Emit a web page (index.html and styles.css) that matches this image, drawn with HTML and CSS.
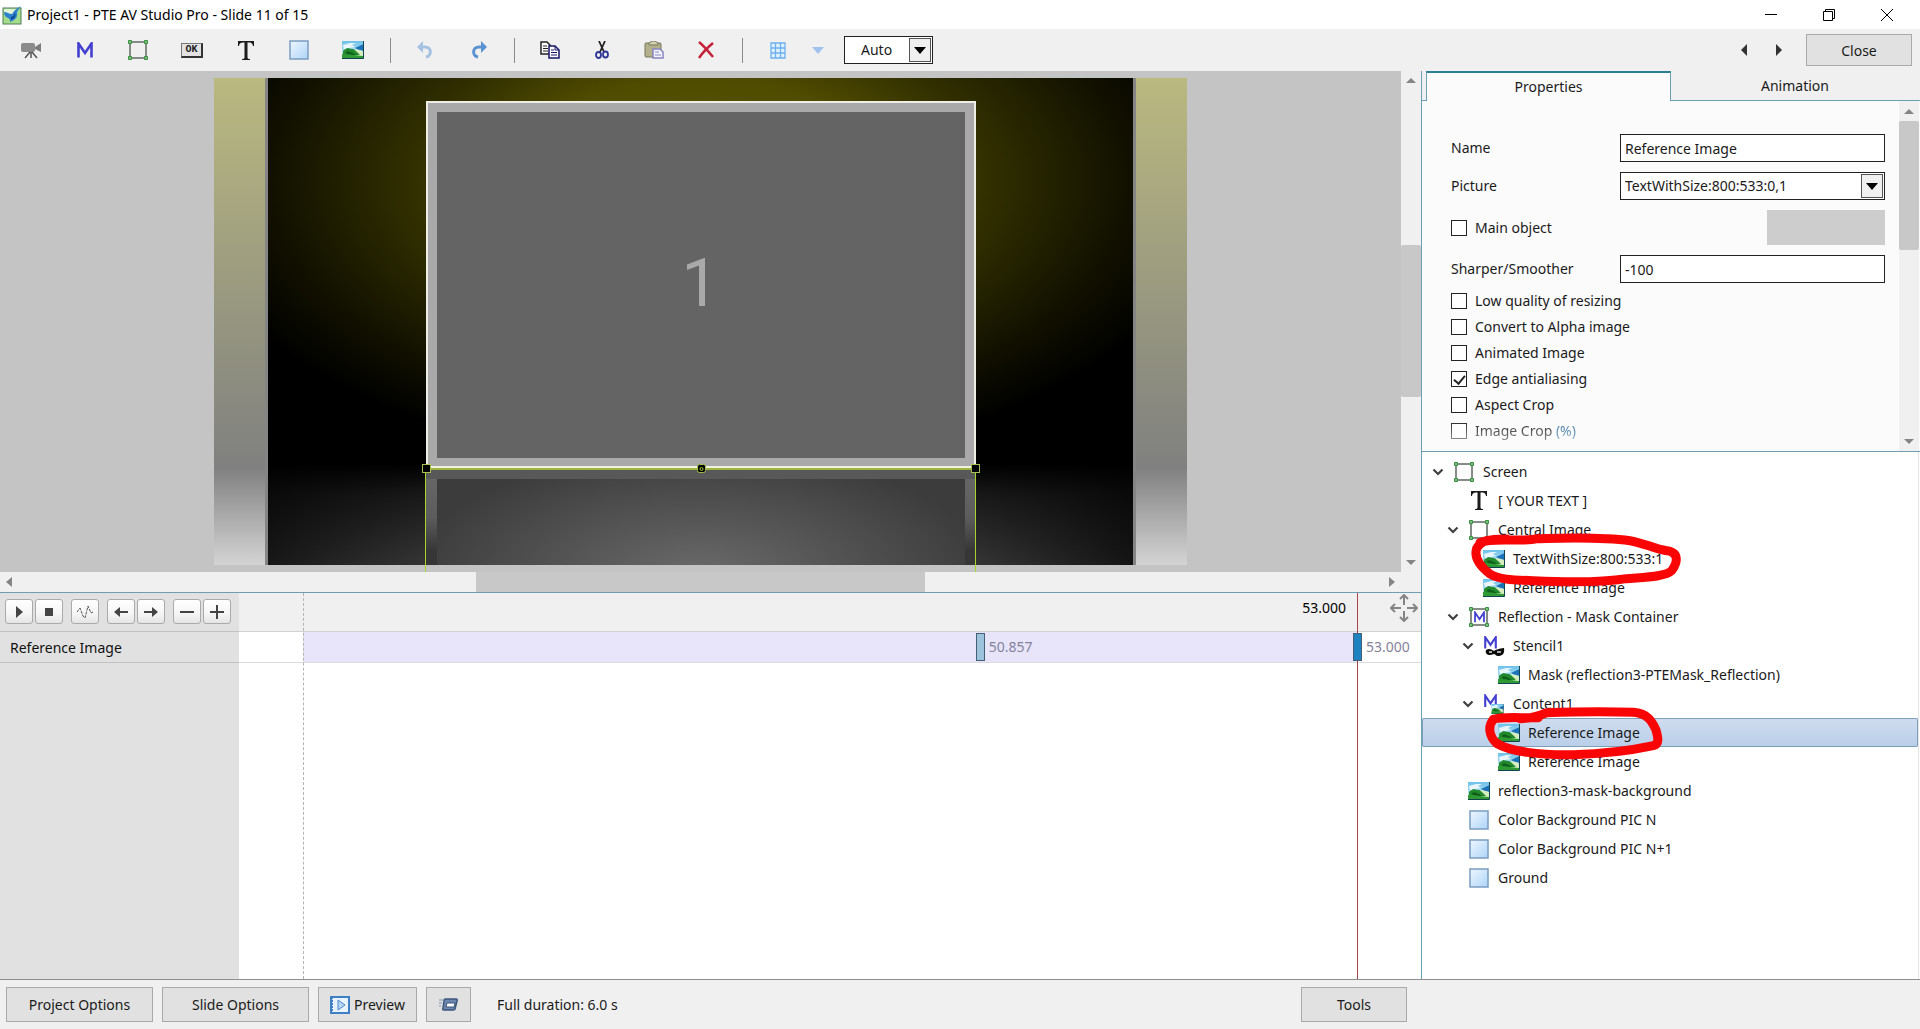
FILE: index.html
```html
<!DOCTYPE html>
<html lang="en">
<head>
<meta charset="utf-8">
<title>Project1 - PTE AV Studio Pro - Slide 11 of 15</title>
<link rel="stylesheet" href="styles.css">
</head>
<body>
<svg class="defs" width="0" height="0" aria-hidden="true">
  <defs>
    <linearGradient id="sky" x1="0" y1="0" x2="0" y2="1"><stop offset="0" stop-color="#6cc0ea"/><stop offset="1" stop-color="#e2f6f4"/></linearGradient>
    <linearGradient id="pane" x1="0" y1="0" x2="1" y2="1"><stop offset="0" stop-color="#eef7ff"/><stop offset="1" stop-color="#aed4f8"/></linearGradient>
    <symbol id="i-image" viewBox="0 0 22 18">
      <rect width="22" height="18" fill="url(#sky)"/>
      <path d="M1 4 8 2l6 0-4 2 3 2-6 1-5 1z" fill="#fff" opacity=".8"/>
      <path d="M13 7c3-1 5-3 9-4v7l-5-1z" fill="#1b72b8"/>
      <path d="M12 9c4-1 7 0 10 2v5H9z" fill="#d6edc0"/>
      <path d="M1 11c0-3 3-2 4-4 2 0 3 1 5 1 3 0 3 2 5 3l3 3H1z" fill="#238a2c"/>
      <path d="M4 11c3-2 4 0 7 1l3 2H5z" fill="#0d5f1b"/>
      <path d="M0 13c7 0 12 1 21 2v3H0z" fill="#2f9a33"/>
      <path d="M21.500 0v17.500H0" fill="none" stroke="#0f4450"/>
    </symbol>
    <symbol id="i-frame" viewBox="0 0 20 20">
      <rect x="2" y="2" width="16" height="16" fill="none" stroke="#858b85" stroke-width="2"/>
      <g fill="#7bc47f" stroke="#3b8f43"><path d="M.5.5h3v3h-3zM16.500.5h3v3h-3zM.5 16.500h3v3h-3zM16.500 16.500h3v3h-3z"/></g>
    </symbol>
    <symbol id="i-square" viewBox="0 0 20 20"><rect x="1" y="1" width="18" height="18" fill="url(#pane)" stroke="#7b9cc0" stroke-width="1.500"/></symbol>
    <symbol id="i-chevron" viewBox="0 0 12 8"><path d="M1.500 1.500 6 6l4.500-4.500" fill="none" stroke="#404040" stroke-width="2.200"/></symbol>
    <symbol id="i-down" viewBox="0 0 12 7"><path d="M0 0h12L6 7z" fill="currentColor"/></symbol>
    <symbol id="i-m" viewBox="0 0 16 16"><path d="M1.500 15.500V1.500L8 11l6.500-9.500v14" fill="none" stroke="currentColor" stroke-width="2.600"/></symbol>
    <symbol id="i-t" viewBox="0 0 16 19"><path d="M0 0h16v5h-1c-.5-3-1.500-3.600-5.500-3.600V16c0 1.500.5 2 2.500 2v1H4v-1c2 0 2.500-.5 2.500-2V1.400C2.500 1.400 1.500 2 1 5H0z" fill="#1c1c1c"/></symbol>
  </defs>
</svg>

<header class="titlebar">
  <svg class="app-icon" width="20" height="20" viewBox="0 0 20 20">
    <rect x="1" y="3" width="18" height="16" fill="#a5dc8b" stroke="#4f7f55"/>
    <path d="M2 4h15l-5 5-6 1-4-2z" fill="#dff3d8"/>
    <path d="M2 7c3 0 5 2 8 2l3-4 6-4-4 6c1 6-2 8-7 10 0-2 0-3-2-4-3-1-4-3-4-6z" fill="#2c82cc"/>
    <path d="M9 12c2 0 4-2 4-5 1 4 0 6-4 8z" fill="#0b418f"/>
  </svg>
  <h1 class="title">Project1 - PTE AV Studio Pro - Slide 11 of 15</h1>
  <div class="window-buttons">
    <button aria-label="Minimize"><svg width="12" height="12" viewBox="0 0 12 12"><path d="M0 5.500h12"/></svg></button>
    <button aria-label="Restore"><svg width="12" height="12" viewBox="0 0 12 12"><path d="M.5 2.500h9v9h-9zM2.500 2.500v-2h9v9h-2"/></svg></button>
    <button aria-label="Close window"><svg width="12" height="12" viewBox="0 0 12 12"><path d="m0 0 12 12M12 0 0 12"/></svg></button>
  </div>
</header>

<nav class="toolbar">
  <div class="tools tools-objects">
    <button aria-label="Camera"><svg width="20" height="20" viewBox="0 0 20 20"><rect y="3" width="14" height="9" rx="2" fill="#8b8b8b"/><path d="M14 7l6-4v9l-6-3z" fill="#7d7d7d"/><path d="M10 12v6M9 12l-5 6M11 12l5 6" stroke="#555" stroke-width="1.500"/></svg></button>
    <button class="blue" aria-label="Mask"><svg width="16" height="16"><use href="#i-m"/></svg></button>
    <button aria-label="Frame"><svg width="20" height="20"><use href="#i-frame"/></svg></button>
    <button aria-label="Button"><span class="ok">OK</span></button>
    <button aria-label="Text"><svg width="16" height="19"><use href="#i-t"/></svg></button>
    <button aria-label="Rectangle"><svg width="20" height="20"><use href="#i-square"/></svg></button>
    <button aria-label="Image"><svg width="22" height="18"><use href="#i-image"/></svg></button>
  </div>
  <span class="sep"></span>
  <div class="tools">
    <button aria-label="Undo"><svg width="16" height="18" viewBox="0 0 16 18"><path d="M4 6h4c7 0 7 9 1 10" fill="none" stroke="#a5c2e3" stroke-width="3"/><path d="M0 6l6-6v12z" fill="#a5c2e3"/></svg></button>
    <button aria-label="Redo"><svg width="16" height="18" viewBox="0 0 16 18"><path d="M12 6H8c-7 0-7 9-1 10" fill="none" stroke="#5b92d2" stroke-width="3"/><path d="M16 6l-6-6v12z" fill="#5b92d2"/></svg></button>
  </div>
  <span class="sep"></span>
  <div class="tools tools-edit">
    <button aria-label="Copy"><svg width="20" height="18" viewBox="0 0 20 18"><path d="M1 1h6l3 3v9H1z" fill="#fff" stroke="#222" stroke-width="1.500"/><path d="M3 5h4M3 7.500h5M3 10h5" stroke="#222"/><path d="M9 5h6l4 4v8H9z" fill="#fff" stroke="#15156b" stroke-width="1.500"/><path d="M15 5v4h4M11 9h3M11 11.500h6M11 14h6" fill="none" stroke="#15156b"/></svg></button>
    <button aria-label="Cut"><svg width="14" height="18" viewBox="0 0 14 18"><path d="M4 0l5 11M10 0L5 11" stroke="#222" stroke-width="1.800"/><g fill="none" stroke="#2f3696" stroke-width="1.800"><ellipse cx="3.500" cy="14" rx="2.500" ry="3"/><ellipse cx="10.500" cy="13.500" rx="2.500" ry="3"/></g></svg></button>
    <button aria-label="Paste"><svg width="20" height="18" viewBox="0 0 20 18"><rect x="1" y="2" width="16" height="14" rx="1" fill="#b3b18b" stroke="#77765a"/><path d="M5 4V2l3-2h3l3 2v2z" fill="#d2d0ae" stroke="#77765a"/><path d="M9 8h7l3 3v6H9z" fill="#f4f4ff" stroke="#8884c0" stroke-width="1.500"/><path d="M11 11h4M11 14h6" stroke="#8884c0"/></svg></button>
    <button aria-label="Delete"><svg width="16" height="18" viewBox="0 0 16 18"><path d="M1 1c5 4 9 9 14 15M15 2C9 7 5 11 1 17" fill="none" stroke="#c5203a" stroke-width="2.500"/></svg></button>
  </div>
  <span class="sep"></span>
  <div class="tools tools-grid">
    <button aria-label="Grid"><svg width="16" height="17" viewBox="0 0 16 17"><path d="M1 1h14v15H1zM1 6h14M1 11h14M5.500 1v15M10.500 1v15" fill="#e1f1ff" stroke="#6cb0ee" stroke-width="1.300"/></svg></button>
    <button class="caret" aria-label="Grid options"><svg width="12" height="7"><use href="#i-down"/></svg></button>
    <div class="select zoom-select">
      <select aria-label="Zoom"><option>Auto</option></select>
      <span class="drop"><svg width="12" height="7"><use href="#i-down"/></svg></span>
    </div>
  </div>
  <div class="slide-nav">
    <button aria-label="Previous slide"><svg width="6" height="12" viewBox="0 0 6 12"><path d="M6 0v12L0 6z"/></svg></button>
    <button aria-label="Next slide"><svg width="6" height="12" viewBox="0 0 6 12"><path d="M0 0v12l6-6z"/></svg></button>
    <button class="push close">Close</button>
  </div>
</nav>

<div class="workspace">
  <main class="editor">
    <div class="canvas-row">
      <div class="canvas">
        <svg class="slide" width="973" height="501" viewBox="214 71 973 501">
          <defs>
            <linearGradient id="wall" x1="0" y1="0" x2="0" y2="1"><stop offset="0" stop-color="#bab980"/><stop offset=".8" stop-color="#808080"/><stop offset="1" stop-color="#d4d4d4"/></linearGradient>
            <radialGradient id="glow" gradientUnits="userSpaceOnUse" cx="0" cy="0" r="1" gradientTransform="translate(700 180) scale(520 285)"><stop offset="0" stop-color="#605b00"/><stop offset=".36" stop-color="#4f4b00"/><stop offset=".54" stop-color="#333100"/><stop offset=".83" stop-color="#111000"/><stop offset="1" stop-color="#000"/></radialGradient>
            <linearGradient id="floor"><stop offset="0" stop-color="#171717"/><stop offset=".18" stop-color="#353535"/><stop offset=".5" stop-color="#686868"/><stop offset=".82" stop-color="#353535"/><stop offset="1" stop-color="#141414"/></linearGradient>
            <linearGradient id="horizon" x1="0" y1="0" x2="0" y2="1"><stop offset="0" stop-color="#000"/><stop offset=".3" stop-color="#000" stop-opacity=".55"/><stop offset="1" stop-color="#000" stop-opacity="0"/></linearGradient>
            <radialGradient id="mirror" gradientUnits="userSpaceOnUse" cx="0" cy="0" r="1" gradientTransform="translate(700 575) scale(290 125)"><stop offset="0" stop-color="#6a6a6a"/><stop offset="1" stop-color="#3c3c3c"/></radialGradient>
            <linearGradient id="fade" x1="0" y1="0" x2="0" y2="1"><stop offset="0" stop-color="#686868"/><stop offset=".5" stop-color="#5c5c5c"/><stop offset=".85" stop-color="#363636"/></linearGradient>
          </defs>
          <rect x="214" y="78" width="973" height="487" fill="url(#wall)"/>
          <path d="M266.500 78v487M1134.500 78v487" stroke="#858585" stroke-width="3"/>
          <rect x="268" y="78" width="865" height="487" fill="#000"/>
          <rect x="268" y="78" width="865" height="390" fill="url(#glow)"/>
          <rect x="268" y="465" width="865" height="100" fill="url(#floor)"/>
          <rect x="268" y="464" width="865" height="101" fill="url(#horizon)"/>
          <rect x="426" y="470" width="550" height="95" fill="url(#fade)"/>
          <path d="M426 470h550v9H426z" fill="#585858"/>
          <rect x="437" y="479" width="528" height="86" fill="url(#mirror)"/>
          <rect x="427" y="102" width="548" height="365" fill="#a9a9a9" stroke="#eeeee6" stroke-width="2"/>
          <rect x="437" y="112" width="528" height="346" fill="#646464"/>
          <text class="slide-number" x="700" y="306" text-anchor="middle">1</text>
          <path d="M426 467.500h550" stroke="#f2f5dc"/>
          <path d="M426 469h550" stroke="#9bb540" stroke-width="2"/>
          <path d="M425.500 468v104M975.500 468v104" fill="none" stroke="#a6d52c"/>
          <g fill="#000" stroke="#a6c050"><rect x="422.500" y="464.500" width="8" height="8"/><rect x="971.500" y="464.500" width="8" height="8"/><rect x="697.500" y="464.500" width="8" height="8" rx="2"/></g>
          <circle cx="701.500" cy="469" r="1.500" fill="none" stroke="#a6d52c"/>
        </svg>
      </div>
      <div class="scroll-v">
        <svg width="10" height="5" viewBox="0 0 10 5"><path d="M0 5h10L5 0z"/></svg>
        <span class="thumb"></span>
        <svg width="10" height="5" viewBox="0 0 10 5"><path d="M0 0h10L5 5z"/></svg>
      </div>
    </div>
    <div class="scroll-h">
      <svg width="6" height="10" viewBox="0 0 6 10"><path d="M6 0v10L0 5z"/></svg>
      <span class="thumb"></span>
      <svg width="6" height="10" viewBox="0 0 6 10"><path d="M0 0v10l6-5z"/></svg>
    </div>

    <section class="timeline">
      <div class="tracks">
        <div class="transport">
          <div class="pair">
            <button aria-label="Play"><svg width="7" height="12" viewBox="0 0 7 12"><path d="M0 0v12l7-6z"/></svg></button>
            <button aria-label="Stop"><svg width="8" height="8" viewBox="0 0 8 8"><path d="M0 0h8v8H0z"/></svg></button>
          </div>
          <div class="pair">
            <button aria-label="Waveform"><svg width="16" height="14" viewBox="0 0 16 14"><path d="M0 7l3-4 3 8 2 2 3-12 3 7 2-1" fill="none" stroke="#555" stroke-dasharray="3 1"/></svg></button>
          </div>
          <div class="pair">
            <button aria-label="Previous keyframe"><svg width="14" height="12" viewBox="0 0 14 12"><path d="M0 6l6-5v4h8v2H6v4z"/></svg></button>
            <button aria-label="Next keyframe"><svg width="14" height="12" viewBox="0 0 14 12"><path d="M14 6L8 1v4H0v2h8v4z"/></svg></button>
          </div>
          <div class="pair">
            <button aria-label="Remove keyframe"><svg width="14" height="14" viewBox="0 0 14 14"><path d="M0 6h14v2H0z"/></svg></button>
            <button aria-label="Add keyframe"><svg width="14" height="14" viewBox="0 0 14 14"><path d="M0 6h6V0h2v6h6v2H8v6H6V8H0z"/></svg></button>
          </div>
        </div>
        <div class="track-name">Reference Image</div>
      </div>
      <div class="lanes">
        <div class="ruler">
          <output class="time">53.000</output>
          <svg class="move" width="28" height="28" viewBox="0 0 28 28"><path d="M14 2v9M14 17v9M2 14h9M17 14h9M10 5l4-4 4 4M10 23l4 4 4-4M5 10l-4 4 4 4M23 10l4 4-4 4" fill="none" stroke="#858585" stroke-width="2"/></svg>
        </div>
        <div class="lane">
          <div class="clip">
            <div class="key" style="left: 64.2%"><span class="mark"></span>50.857</div>
            <div class="key" style="left: 100%"><span class="mark current"></span>53.000</div>
          </div>
        </div>
        <span class="start-line"></span>
        <span class="playhead"></span>
      </div>
    </section>
  </main>

  <aside class="side">
    <div class="tabs" role="tablist">
      <button class="tab active" role="tab" aria-selected="true">Properties</button>
      <button class="tab" role="tab" aria-selected="false">Animation</button>
    </div>
    <section class="properties">
      <form class="form">
        <div class="field"><label for="name">Name</label><input class="box" id="name" type="text" value="Reference Image"></div>
        <div class="field"><label for="picture">Picture</label>
          <div class="select"><select id="picture"><option>TextWithSize:800:533:0,1</option></select><span class="drop"><svg width="12" height="7"><use href="#i-down"/></svg></span></div>
        </div>
        <div class="field main-object"><label class="check"><input type="checkbox">Main object</label><button class="swatch" type="button" aria-label="Picture action"></button></div>
        <div class="field"><label for="sharp">Sharper/Smoother</label><input class="box" id="sharp" type="text" value="-100"></div>
        <div class="checks">
          <label class="check"><input type="checkbox">Low quality of resizing</label>
          <label class="check"><input type="checkbox">Convert to Alpha image</label>
          <label class="check"><input type="checkbox">Animated Image</label>
          <label class="check"><input type="checkbox" checked>Edge antialiasing</label>
          <label class="check"><input type="checkbox">Aspect Crop</label>
          <label class="check fading"><input type="checkbox"><span>Image Crop <span class="unit">(%)</span></span></label>
        </div>
      </form>
      <div class="scroll-v">
        <svg width="10" height="5" viewBox="0 0 10 5"><path d="M0 5h10L5 0z"/></svg>
        <span class="thumb"></span>
        <svg width="10" height="5" viewBox="0 0 10 5"><path d="M0 0h10L5 5z"/></svg>
      </div>
    </section>
    <section class="objects">
      <ul class="tree">
        <li class="level-0"><svg class="chev"><use href="#i-chevron"/></svg><span class="ico"><svg width="20" height="20"><use href="#i-frame"/></svg></span>Screen</li>
        <li class="level-1"><span class="chev"></span><span class="ico"><svg width="16" height="19"><use href="#i-t"/></svg></span>[ YOUR TEXT ]</li>
        <li class="level-1"><svg class="chev"><use href="#i-chevron"/></svg><span class="ico"><svg width="20" height="20"><use href="#i-frame"/></svg></span>Central Image</li>
        <li class="level-2"><span class="chev"></span><span class="ico"><svg width="22" height="18"><use href="#i-image"/></svg></span>TextWithSize:800:533:1</li>
        <li class="level-2"><span class="chev"></span><span class="ico"><svg width="22" height="18"><use href="#i-image"/></svg></span>Reference Image</li>
        <li class="level-1"><svg class="chev"><use href="#i-chevron"/></svg><span class="ico blue"><svg width="20" height="20"><use href="#i-frame"/><use href="#i-m" x="5" y="4" width="11" height="12"/></svg></span>Reflection - Mask Container</li>
        <li class="level-2"><svg class="chev"><use href="#i-chevron"/></svg><span class="ico blue"><svg width="22" height="22"><use href="#i-m" x="1" y="1" width="13" height="13"/><path d="M3 15c3-2 5-1 8 1 3-2 5-2 10-3 1 6-2 8-6 8-2 0-3-2-4-2s-2 1-4 1c-3 0-5-2-4-5z" fill="#0a0a0a"/><path d="M6 17h3M14 17h4" stroke="#ddd" stroke-width="1.500"/></svg></span>Stencil1</li>
        <li class="level-3"><span class="chev"></span><span class="ico"><svg width="22" height="18"><use href="#i-image"/></svg></span>Mask (reflection3-PTEMask_Reflection)</li>
        <li class="level-2"><svg class="chev"><use href="#i-chevron"/></svg><span class="ico blue"><svg width="22" height="22"><use href="#i-m" x="1" y="1" width="13" height="14"/><use href="#i-image" x="8" y="11" width="13" height="10"/></svg></span>Content1</li>
        <li class="level-3 selected"><span class="chev"></span><span class="ico"><svg width="22" height="18"><use href="#i-image"/></svg></span>Reference Image</li>
        <li class="level-3"><span class="chev"></span><span class="ico"><svg width="22" height="18"><use href="#i-image"/></svg></span>Reference Image</li>
        <li class="level-1"><span class="chev"></span><span class="ico"><svg width="22" height="18"><use href="#i-image"/></svg></span>reflection3-mask-background</li>
        <li class="level-1"><span class="chev"></span><span class="ico"><svg width="20" height="20"><use href="#i-square"/></svg></span>Color Background PIC N</li>
        <li class="level-1"><span class="chev"></span><span class="ico"><svg width="20" height="20"><use href="#i-square"/></svg></span>Color Background PIC N+1</li>
        <li class="level-1"><span class="chev"></span><span class="ico"><svg width="20" height="20"><use href="#i-square"/></svg></span>Ground</li>
      </ul>
      <svg class="markup" width="300" height="400" viewBox="66 36 900 1200" aria-hidden="true">
        <path d="M240 308C280 290 370 308 410 296C500 294 600 290 690 302C730 308 765 328 800 332C842 338 830 372 815 392C795 412 720 412 680 416C600 428 480 426 400 422C340 420 300 420 270 402C235 375 222 350 230 325C245 300 265 298 320 297"/>
        <path d="M415 833C370 835 310 828 280 838C262 860 268 890 290 910C330 935 420 946 520 944C600 942 700 930 760 917C778 912 775 895 768 870C755 840 740 820 700 817C620 814 500 816 440 818C425 825 400 835 360 836"/>
      </svg>
    </section>
  </aside>
</div>

<footer class="bottombar">
  <button class="push wide">Project Options</button>
  <button class="push wide">Slide Options</button>
  <button class="push preview"><svg width="20" height="18" viewBox="0 0 20 18"><rect x="1" y="1" width="18" height="16" fill="#e8f3ff" stroke="#3f7fc4" stroke-width="2"/><path d="M1 1v16" stroke="#3f7fc4" stroke-width="4" stroke-dasharray="2 1"/><path d="M8 4v10l7-5z" fill="#b7d6f5" stroke="#4a86c8"/></svg>Preview</button>
  <button class="push window" aria-label="Preview window"><svg width="20" height="16" viewBox="0 0 20 16"><path d="M6 2h11q2 0 1 2l-2 8q0 1-2 1H5q-2 0-1-2l1-7q0-2 1-2z" fill="#6c87ad" stroke="#3c567c" stroke-width="1.500"/><path d="M8 6h8l-1 4H7z" fill="#fff" stroke="#3c567c"/><path d="M0 3h4M0 6h3M0 9h2" stroke="#8295b0"/></svg></button>
  <span class="duration">Full duration: 6.0 s</span>
  <button class="push tools-button">Tools</button>
</footer>
</body>
</html>
```
FILE: styles.css
```css
* { box-sizing: border-box; }

body {
  margin: 0;
  height: 100vh;
  display: flex;
  flex-direction: column;
  overflow: hidden;
  background: #f0f0f0;
  color: #1a1a1a;
  font: 14px/20px "Noto Sans", "Open Sans", sans-serif;
}

button, input, select { font: inherit; color: inherit; margin: 0; }
button { padding: 0; border: 0; background: none; display: flex; align-items: center; justify-content: center; }
svg { display: block; flex: none; }
.defs { position: absolute; }
.blue { color: #4440d0; }

/* Title bar */
.titlebar { display: flex; align-items: center; height: 29px; padding-left: 2px; background: #fff; flex: none; }
.title { margin: 0 auto 0 5px; font-size: 14px; font-weight: 400; color: #000; }
.window-buttons { display: flex; padding-right: 4px; }
.window-buttons button { width: 58px; height: 28px; }
.window-buttons svg { fill: none; stroke: #000; }

/* Toolbar */
.toolbar { display: flex; align-items: center; height: 42px; padding: 0 8px 0 13px; flex: none; }
.tools { display: flex; align-items: center; gap: 18px; margin: 0 17px 0 16px; }
.tools button { width: 36px; height: 32px; }
.tools-objects { width: 358px; margin: 0 19px 0 0; gap: 0; justify-content: space-between; }
.tools-edit { gap: 16px; margin: 0 18px 0 17px; }
.tools-grid { gap: 0; margin: 0 0 0 17px; }
.tools .caret { width: 44px; color: #a0c4ef; margin-right: 4px; }
.sep { width: 1px; height: 25px; background: #8b8b8b; }
.ok {
  width: 22px; height: 15px; border: 1px solid #777; border-right: 2px solid #333; border-bottom: 2px solid #333;
  background: #e2e2e2; font: bold 10px/12px "Liberation Mono", monospace; text-align: center;
}
.slide-nav { display: flex; align-items: center; margin-left: auto; }
.slide-nav button { width: 35px; height: 30px; fill: #333; }
.push { height: 35px; border: 1px solid #a9a9a9; background: #e1e1e1; flex: none; }
.slide-nav .close { width: 106px; height: 32px; margin-left: 10px; padding-top: 2px; }

/* Drop-downs and text boxes */
.select { position: relative; height: 28px; }
.select select { width: 100%; height: 28px; padding: 0 28px 0 4px; border: 1px solid #222; border-radius: 0; background: #fff; appearance: none; }
.drop {
  position: absolute; top: 2px; right: 2px; bottom: 2px; width: 22px; display: flex; align-items: center; justify-content: center;
  border: 1px solid #555; background: #f0f0f0; color: #000; pointer-events: none;
}
.zoom-select { width: 89px; }
.zoom-select select { padding-left: 16px; }
.box { height: 28px; padding: 0 4px; border: 1px solid #222; border-radius: 0; background: #fff; min-width: 0; }

/* Main split */
.workspace { display: flex; flex: 1; min-height: 0; }
.editor { display: flex; flex-direction: column; flex: 1; min-width: 0; }

/* Slide canvas */
.canvas-row { display: flex; flex: none; }
.canvas { display: flex; justify-content: center; flex: 1; min-width: 0; overflow: hidden; background: #c4c4c4; }
.slide-number { font: 66px Roboto, "Liberation Sans", sans-serif; fill: #a9a9a9; }
.scroll-v { display: flex; flex-direction: column; align-items: center; width: 20px; padding: 7px 0; background: #f0f0f0; fill: #858585; flex: none; }
.scroll-v .thumb { width: 20px; height: 152px; margin: 162px 0 auto; border-radius: 2px; background: #c8c8c8; }
.scroll-h { display: flex; align-items: center; height: 20px; padding: 0 26px 0 6px; fill: #858585; flex: none; }
.scroll-h .thumb { width: 449px; height: 20px; margin: 0 auto 0 464px; background: #c8c8c8; }

/* Timeline */
.timeline { display: flex; flex: 1; min-height: 0; border-top: 1px solid #6f9db5; background: #fff; }
.tracks { width: 239px; background: #e1e1e1; flex: none; }
.transport { display: flex; gap: 8px; height: 39px; padding: 6px 5px 0; border-bottom: 1px solid #c2c2c2; }
.pair { display: flex; gap: 2px; }
.pair button { width: 28px; height: 25px; border: 1px solid #aaa; border-radius: 3px; background: linear-gradient(#fff, #f5f5f5 60%, #e5e5e5); fill: #444; }
.track-name { height: 31px; padding-left: 10px; border-bottom: 1px solid #c2c2c2; line-height: 32px; color: #111; }
.lanes { position: relative; flex: 1; min-width: 0; }
.ruler { display: flex; justify-content: flex-end; height: 39px; padding: 1px 3px 0 0; border-bottom: 1px solid #d2d2d2; background: #f0f0f0; }
.time { margin: 4px 44px 0 0; color: #000; }
.lane { height: 31px; padding: 0 64px; border-bottom: 1px solid #dcdcdc; }
.clip { position: relative; height: 30px; background: #e8e5fb; }
.key { position: absolute; top: 1px; z-index: 1; display: flex; align-items: center; gap: 4px; height: 28px; margin-left: -4px; color: #85839a; }
.mark { width: 9px; height: 28px; border: 1px solid #456076; background: #9cc2dc; }
.mark.current { background: #1d82bf; }
.start-line { position: absolute; top: 0; bottom: 0; left: 64px; border-left: 1px dashed #b4b4b4; }
.playhead { position: absolute; top: 0; bottom: 0; right: 63px; width: 1px; background: #a8434b; }

/* Side panel */
.side { display: flex; flex-direction: column; width: 499px; border-left: 1px solid #6aa0b4; background: #fff; flex: none; }
.tabs { display: flex; height: 30px; padding: 0 1px 0 4px; background: linear-gradient(#6aa0b4, #6aa0b4) bottom / 100% 1px no-repeat #f0f0f0; flex: none; }
.tab { flex: 1; }
.tab.active { flex: 0 0 245px; border: solid #6aa0b4; border-width: 2px 1px 0; border-top-color: #2c7f93; background: #fbfbfb; }
.properties { display: flex; height: 351px; padding-right: 1px; border-bottom: 1px solid #6f9db5; background: #fbfbfb; flex: none; overflow: hidden; }
.form { display: flex; flex-direction: column; gap: 10px; flex: 1; padding: 33px 14px 0 29px; min-width: 0; }
.field { display: grid; grid-template-columns: 169px 1fr; align-items: center; }
.main-object { grid-template-columns: 1fr 118px; }
.swatch { height: 35px; background: #cdcdcd; }
.checks { display: flex; flex-direction: column; margin-top: -5px; }
.check { display: flex; align-items: center; gap: 8px; height: 26px; }
.check input { appearance: none; position: relative; width: 16px; height: 16px; border: 1px solid #222; outline: 0; background: #fff; flex: none; }
.check input:checked::after { content: ""; position: absolute; left: 4px; top: 1px; width: 5px; height: 9px; border: solid #222; border-width: 0 2px 2px 0; transform: rotate(40deg); }
.fading { mask-image: linear-gradient(#000 10%, rgba(0, 0, 0, .4)); }
.unit { color: #2d6f9c; }
.properties .scroll-v { padding: 8px 0 7px; }
.properties .scroll-v .thumb { height: 129px; margin-top: 7px; }

/* Object tree */
.objects { position: relative; flex: 1; min-height: 0; margin-right: 1px; border-right: 1px solid #e5e5e5; overflow: hidden; }
.tree { list-style: none; margin: 0; padding: 5px 0 0; }
.tree li { display: flex; align-items: center; height: 29px; padding-left: 10px; white-space: nowrap; }
.tree .level-1 { padding-left: 25px; }
.tree .level-2 { padding-left: 40px; }
.tree .level-3 { padding-left: 55px; }
.tree .selected { border-radius: 2px; background: linear-gradient(#d0ddef, #b9cee9); box-shadow: inset 0 0 0 1px #7f9fb9; }
.chev { width: 12px; height: 8px; }
.ico { display: flex; align-items: center; justify-content: center; width: 22px; margin: 0 8px 0 9px; }
.markup { position: absolute; top: 0; left: 0; fill: none; stroke: #fa0505; stroke-width: 27px; stroke-linecap: round; stroke-linejoin: round; pointer-events: none; }

/* Bottom bar */
.bottombar { display: flex; align-items: center; gap: 9px; height: 50px; padding: 0 513px 0 6px; border-top: 1px solid #8f8f8f; flex: none; }
.wide { width: 147px; }
.preview { width: 99px; gap: 4px; }
.window { width: 45px; }
.duration { margin-left: 17px; white-space: nowrap; }
.tools-button { width: 106px; margin-left: auto; }
```
